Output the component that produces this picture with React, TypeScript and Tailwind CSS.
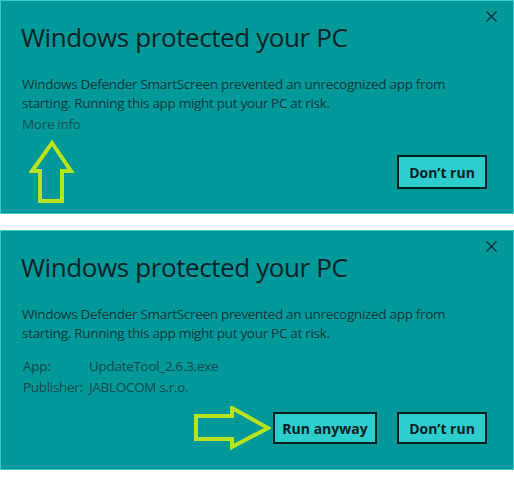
import { FC } from 'react'

const font = { fontFamily: '"Open Sans", "Noto Sans", Arial, sans-serif' }

const CloseIcon: FC = () => (
  <svg width="11" height="11" viewBox="0 0 11 11" className="shrink-0">
    <path d="M0.5 0.5L10.5 10.5M10.5 0.5L0.5 10.5" stroke="#0d2f33" strokeWidth="1.3" />
  </svg>
)

const Header: FC = () => (
  <div className="flex justify-between pl-[20px] pr-[16px] pt-[10px]">
    <h1 className="mt-[9px] text-[26px] leading-[35px] font-normal text-[#0a2326] tracking-[-0.4px]">
      Windows protected your PC
    </h1>
    <CloseIcon />
  </div>
)

const Message: FC = () => (
  <p className="mt-[20px] pl-[21px] text-[13.5px] leading-[19px] text-[#0c3b40] tracking-[-0.3px]">
    Windows Defender SmartScreen prevented an unrecognized app from
    <br />
    starting. Running this app might put your PC at risk.
  </p>
)

const Button: FC<{ label: string; w: string }> = ({ label, w }) => (
  <button
    className={`${w} h-full border-2 border-[#0a1f22] bg-[#2dcdcd] text-[14px] font-bold text-[#0a1f22]`}
  >
    {label}
  </button>
)

const UpArrow: FC = () => (
  <svg width="46" height="64" viewBox="0 0 46 64">
    <path
      d="M23 3 L42 31 L33 31 L33 61 L11 61 L11 31 L3 31 Z"
      fill="none"
      stroke="#b9e41c"
      strokeWidth="4"
      strokeLinejoin="miter"
    />
  </svg>
)

const RightArrow: FC = () => (
  <svg width="78" height="44" viewBox="0 0 78 44">
    <path
      d="M3 10 L39 10 L39 2 L75 22 L39 41 L39 33 L3 33 Z"
      fill="none"
      stroke="#b9e41c"
      strokeWidth="4"
      strokeLinejoin="miter"
    />
  </svg>
)

const App: FC = () => {
  return (
    <div className="w-[514px] h-[480px] bg-white" style={font}>
      <section className="h-[214px] border border-[#3ccccc] bg-[#009899]">
        <Header />
        <Message />
        <p className="mt-[2px] pl-[21px] text-[13.5px] leading-[19px] text-[#155357] tracking-[-0.3px]">
          More info
        </p>
        <div className="flex items-start justify-between pl-[28px] pr-[26px]">
          <div className="mt-[6px]">
            <UpArrow />
          </div>
          <div className="mt-[21px] h-[34px]">
            <Button label="Don’t run" w="w-[90px]" />
          </div>
        </div>
      </section>

      <section className="mt-[16px] h-[240px] border border-[#3ccccc] bg-[#009899]">
        <Header />
        <Message />
        <div className="mt-[13px] pl-[22px] text-[13.5px] leading-[21px] text-[#174a4e] tracking-[-0.3px]">
          <div className="flex">
            <span className="w-[66px]">App:</span>
            <span>UpdateTool_2.6.3.exe</span>
          </div>
          <div className="flex">
            <span className="w-[66px]">Publisher:</span>
            <span>JABLOCOM s.r.o.</span>
          </div>
        </div>
        <div className="mt-[8px] flex items-center justify-end gap-[20px] pr-[26px]">
          <div className="mr-[-18px]">
            <RightArrow />
          </div>
          <div className="h-[32px]">
            <Button label="Run anyway" w="w-[104px]" />
          </div>
          <div className="h-[32px]">
            <Button label="Don’t run" w="w-[90px]" />
          </div>
        </div>
      </section>
    </div>
  )
}

export default App
